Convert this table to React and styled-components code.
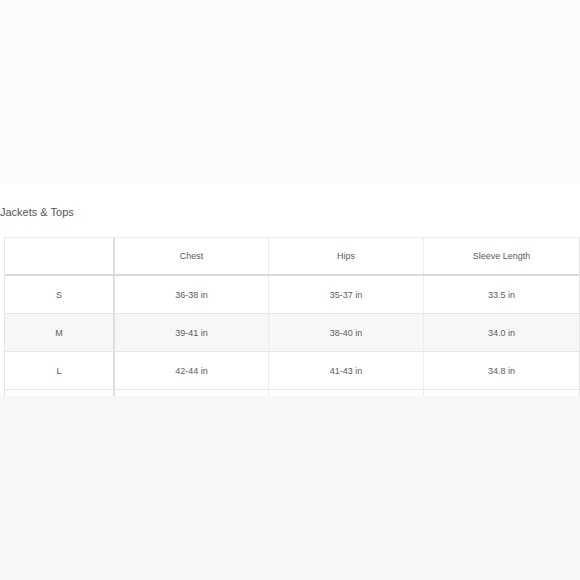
import React from 'react';
import styled, { createGlobalStyle } from 'styled-components';

const sizes = [
  { size: 'S', chest: '36-38 in', hips: '35-37 in', sleeve: '33.5 in' },
  { size: 'M', chest: '39-41 in', hips: '38-40 in', sleeve: '34.0 in' },
  { size: 'L', chest: '42-44 in', hips: '41-43 in', sleeve: '34.8 in' },
];

const App = () => {
  return (
    <Page>
      <GlobalStyle />
      <TopBand />
      <ChartSection>
        <Title>Jackets &amp; Tops</Title>
        <TableClip>
          <Table>
            <HeadRow>
              <Cell first />
              <Cell>Chest</Cell>
              <Cell>Hips</Cell>
              <Cell last>Sleeve Length</Cell>
            </HeadRow>
            {sizes.map((row, i) => (
              <Row key={row.size} striped={i % 2 === 1}>
                <Cell first>{row.size}</Cell>
                <Cell>{row.chest}</Cell>
                <Cell>{row.hips}</Cell>
                <Cell last>{row.sleeve}</Cell>
              </Row>
            ))}
            {/* next row is cut off by the section edge */}
            <Row>
              <Cell first />
              <Cell />
              <Cell />
              <Cell last />
            </Row>
          </Table>
        </TableClip>
      </ChartSection>
      <BottomBand />
    </Page>
  );
};

export default App;

const GlobalStyle = createGlobalStyle`
  html, body {
    margin: 0;
    padding: 0;
    background: #ffffff;
  }
  body {
    font-family: "Liberation Sans", Arial, sans-serif;
  }
`;

const Page = styled.div`
  width: 580px;
  height: 580px;
  display: flex;
  flex-direction: column;
  overflow: hidden;
`;

const TopBand = styled.div`
  height: 184px;
  background: #fcfcfc;
`;

const ChartSection = styled.div`
  height: 212px;
  background: #ffffff;
  display: flex;
  flex-direction: column;
`;

const Title = styled.div`
  padding-top: 22px;
  height: 32px;
  font-size: 11px;
  line-height: 13px;
  color: #555555;
  box-sizing: border-box;
`;

const TableClip = styled.div`
  flex: 1;
  min-height: 0;
  overflow: hidden;
  padding: 21px 2px 0 4px;
`;

const Table = styled.div`
  width: 574px;
  border-top: 1px solid #ececec;
  border-left: 1px solid #e4e4e4;
  border-right: 1px solid #e4e4e4;
`;

const Row = styled.div`
  display: grid;
  grid-template-columns: 110px 154px 155px 1fr;
  height: 38px;
  box-sizing: border-box;
  border-bottom: 1px solid #e6e6e6;
  background: ${props => props.striped ? '#f7f7f7' : '#ffffff'};
`;

const HeadRow = styled(Row)`
  border-bottom: 2px solid #dadada;
`;

const Cell = styled.div`
  display: flex;
  align-items: center;
  justify-content: center;
  font-size: 9px;
  color: #5a5a5a;
  border-right: ${props => props.last ? 'none' : props.first ? '2px solid #dedede' : '1px solid #ececec'};
`;

const BottomBand = styled.div`
  flex: 1;
  background: #f7f7f7;
`;
